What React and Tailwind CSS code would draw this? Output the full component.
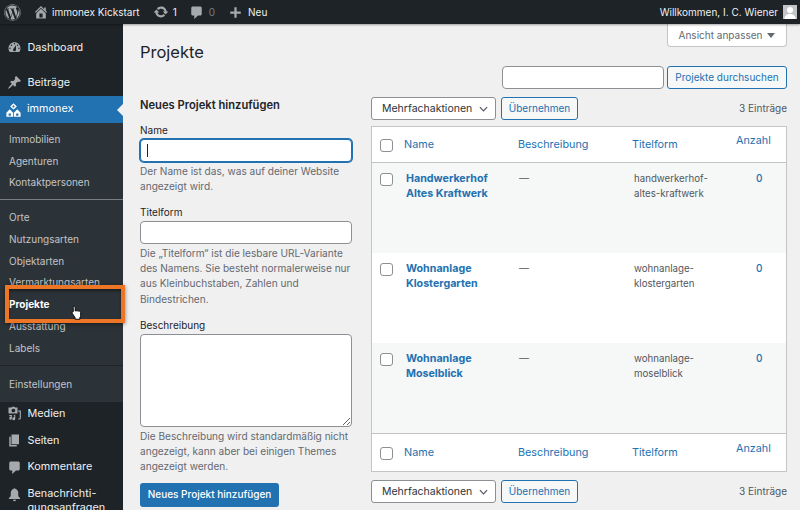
import { FaWordpress } from 'react-icons/fa'

const FONT = "font-['Inter','Liberation_Sans',sans-serif]"

const ICONS = {
  home: 'M16 8.5l1.53 1.53-1.06 1.06L10 4.62l-6.47 6.47-1.06-1.06L10 2.5l4 4v-2h2v4zm-6-2.46l6 5.99V18H4v-5.97zM12 17v-5H8v5h4z',
  update: 'M10.2 3.28c3.53 0 6.43 2.61 6.92 6h2.08l-3.5 4-3.5-4h2.32c-.45-1.97-2.21-3.45-4.32-3.45-1.45 0-2.73.71-3.54 1.78L4.95 5.66C6.23 4.2 8.11 3.28 10.2 3.28zm-.4 13.44c-3.52 0-6.43-2.61-6.92-6H.8l3.5-4c1.17 1.33 2.33 2.67 3.5 4H5.48c.45 1.97 2.21 3.45 4.32 3.45 1.45 0 2.73-.71 3.54-1.78l1.71 1.95c-1.28 1.46-3.15 2.38-5.25 2.38z',
  comment: 'M5 2h10c1.1 0 2 .9 2 2v8c0 1.1-.9 2-2 2h-3l-5 4.5V14H5c-1.1 0-2-.9-2-2V4c0-1.1.9-2 2-2z',
  plus: 'M8.5 3h3v5.5H17v3h-5.500V17h-3v-5.500H3v-3h5.500z',
  dashboard: 'M3.76 16h12.48c1.1-1.37 1.76-3.11 1.76-5 0-4.42-3.58-8-8-8s-8 3.58-8 8c0 1.89.66 3.63 1.76 5zM10 4c.55 0 1 .45 1 1s-.45 1-1 1-1-.45-1-1 .45-1 1-1zM6 6c.55 0 1 .45 1 1s-.45 1-1 1-1-.45-1-1 .45-1 1-1zm8 0c.55 0 1 .45 1 1s-.45 1-1 1-1-.45-1-1 .45-1 1-1zm-5.370 5.550L12 7v6c0 1.100-.9 2-2 2s-2-.9-2-2c0-.57.24-1.080.63-1.450zM4 10c.55 0 1 .45 1 1s-.45 1-1 1-1-.45-1-1 .45-1 1-1zm12 0c.55 0 1 .45 1 1s-.45 1-1 1-1-.45-1-1 .45-1 1-1z',
  pin: 'M10.44 3.02l1.82-1.82 6.36 6.35-1.83 1.82c-1.05-.68-2.48-.57-3.41.36l-.75.75c-.92.93-1.04 2.35-.35 3.41l-1.83 1.82-2.41-2.41-2.8 2.79c-.42.42-3.38 2.71-3.8 2.29s1.86-3.39 2.28-3.81l2.79-2.79L4.1 9.36l1.83-1.82c1.05.69 2.48.57 3.4-.36l.75-.75c.93-.92 1.05-2.35.36-3.41z',
  media: 'M2 2h4l1-1h3l1 1h3v8H2zM8.500 3.500a2.500 2.500 0 1 0 .01 0zM9 12h2v5a2 2 0 1 1-1.500-1.900V13H9zM15 6h3.500v10a2 2 0 0 1-2 2H15v-1.500h1.500a.5.5 0 0 0 .5-.5V7.500h-2zM3 12h3.500v4.500a1.800 1.800 0 1 1-1.500-1.700V13.500H3z',
  pages: 'M6 15V2h10v13H6zm-1 1h8v2H3V5h2v11z',
  bell: 'M10 1.500a1.500 1.500 0 0 1 1.400 1.100C13.700 3.200 15 5.200 15 8v4l2.500 3v1h-15v-1L5 12V8c0-2.800 1.300-4.800 3.600-5.400A1.500 1.500 0 0 1 10 1.500zM8 17h4a2 2 0 0 1-4 0z',
}

function Dash({ name, className }) {
  return (
    <svg viewBox="0 0 20 20" className={className} fill="currentColor">
      <path d={ICONS[name]} />
    </svg>
  )
}

// Logo immonex: drei Haeuser
function ImmonexIcon() {
  return (
    <svg viewBox="0 0 20 18" className="ml-[6px] h-[14px] w-[15px] shrink-0" fill="#fff">
      <path fillRule="evenodd" d="M10 0l4.500 4.200L10 8.400 5.500 4.200zM10 2.800a1.400 1.400 0 1 0 .01 0z" />
      <path fillRule="evenodd" d="M5 8l4.500 4.500V18H.5v-5.500zM3.500 13.500V16.500h3v-3z" />
      <path fillRule="evenodd" d="M15 8l4.500 4.500V18h-9v-5.500zM13.500 13.500V16.500h3v-3z" />
    </svg>
  )
}

function TopBar() {
  return (
    <div className="relative z-20 flex h-6 shrink-0 items-center justify-between bg-[#1d2327] text-[10px] text-[#f0f0f1] shadow-[0_1px_2px_rgba(0,0,0,0.35)]">
      <div className="flex items-center">
        <FaWordpress className="ml-1 h-[17px] w-[17px] text-[#a7aaad]" />
        <Dash name="home" className="ml-[12px] h-[16px] w-[16px] text-[#a7aaad]" />
        <span className="ml-[3px]">immonex Kickstart</span>
        <Dash name="update" className="ml-[13px] h-[16px] w-[16px] text-[#a7aaad]" />
        <span className="ml-[4px]">1</span>
        <Dash name="comment" className="ml-[12px] h-[15px] w-[15px] text-[#a7aaad]" />
        <span className="ml-[5px] text-[#787c82]">0</span>
        <Dash name="plus" className="ml-[13px] h-[15px] w-[15px] text-[#a7aaad]" />
        <span className="ml-[5px]">Neu</span>
      </div>
      <div className="flex items-center">
        <span>Willkommen, I. C. Wiener</span>
        <div className="ml-[5px] mr-[3px] flex h-[14px] w-[14px] items-end justify-center overflow-hidden bg-[#c3c4c7]">
          <svg viewBox="0 0 14 14" className="h-[14px] w-[14px]" fill="#fff">
            <circle cx="7" cy="5" r="3" />
            <path d="M1.500 14c0-3.500 2.500-5 5.500-5s5.500 1.500 5.500 5z" />
          </svg>
        </div>
      </div>
    </div>
  )
}

function MainItem({ icon, label, className = '' }) {
  return (
    <div className={`flex items-center text-[10.800px] leading-[14px] text-[#f0f0f1] ${className}`}>
      <Dash name={icon} className="ml-[7px] h-[15px] w-[15px] shrink-0 text-[#a7aaad]" />
      <span className="ml-[5.500px]">{label}</span>
    </div>
  )
}

function SubItem({ label }) {
  return <div className="flex h-[21.700px] items-center pl-[9px] text-[10px] text-[#c3c4c7]">{label}</div>
}

function Sidebar() {
  return (
    <div className="relative w-[123px] shrink-0 bg-[#1d2327]">
      <MainItem icon="dashboard" label="Dashboard" className="mt-[15px] h-[17px]" />
      <MainItem icon="pin" label="Beiträge" className="mt-[18px] h-[17px]" />
      <div className="relative mt-[5px] flex h-[27px] items-center bg-[#2271b1] text-[10.800px] text-white">
        <ImmonexIcon />
        <span className="ml-[6px]">immonex</span>
        <div className="absolute right-0 top-[8px] h-0 w-0 border-y-[6px] border-r-[6px] border-y-transparent border-r-[#f0f0f1]" />
      </div>
      <div className="bg-[#2c3338]">
        <div className="pt-[5.500px] pb-[5px]">
          <SubItem label="Immobilien" />
          <SubItem label="Agenturen" />
          <SubItem label="Kontaktpersonen" />
        </div>
        <div className="h-px bg-[#787c82]" />
        <div className="pt-[7.500px] pb-[6.500px]">
          <SubItem label="Orte" />
          <SubItem label="Nutzungsarten" />
          <SubItem label="Objektarten" />
          <SubItem label="Vermarktungsarten" />
          <div className="flex h-[21.700px] items-center pl-[9px] text-[10px] font-bold text-white">Projekte</div>
          <SubItem label="Ausstattung" />
          <SubItem label="Labels" />
        </div>
        <div className="h-px bg-[#1d2327]" />
        <div className="flex h-[36px] items-center pl-[9px] text-[10px] text-[#c3c4c7]">Einstellungen</div>
      </div>
      <MainItem icon="media" label="Medien" className="mt-[3px] h-[17px]" />
      <MainItem icon="pages" label="Seiten" className="mt-[10px] h-[17px]" />
      <MainItem icon="comment" label="Kommentare" className="mt-[9.500px] h-[17px]" />
      <div className="mt-[11px] flex text-[10.800px] leading-[14px] text-[#f0f0f1]">
        <Dash name="bell" className="ml-[7px] h-[15px] w-[15px] shrink-0 text-[#a7aaad]" />
        <span className="ml-[5.500px]">Benachrichti-<br />gungsanfragen</span>
      </div>
      {/* Markierung */}
      <div className="absolute left-[5px] top-[261px] z-10 h-[38px] w-[120px] border-[4.500px] border-[#ed7526] shadow-[0_1px_4px_rgba(0,0,0,0.5),inset_0_2px_3px_rgba(0,0,0,0.45)]" />
      <svg viewBox="0 0 16 20" className="absolute left-[71px] top-[281px] z-10 h-[15px] w-[12px]">
        <path d="M4 1.500c.9 0 1.500.6 1.500 1.500v5l1-.3c.5-.1 1 0 1.300.3l1-.2c.5-.1 1 .1 1.300.4l.9-.1c1 0 1.800.7 1.800 1.700v4.200c0 1.200-.4 2.200-1 3v2H5.500v-2L2 11.500c-.7-.8-.6-1.700 0-2.200.6-.4 1.300-.3 1-.3V3c0-.9.100-1.500 1-1.500z" fill="#fff" stroke="#000" strokeWidth="1.200" strokeLinejoin="round" />
      </svg>
    </div>
  )
}

function Field({ label, hint, children, className = '', hintClass = 'mt-[1.500px]' }) {
  return (
    <div className={className}>
      <div className="text-[10px] leading-[15px] text-[#1d2327]">{label}</div>
      {children}
      <p className={`${hintClass} text-[10.100px] leading-[15.200px] text-[#646970]`}>{hint}</p>
    </div>
  )
}

function AddForm() {
  return (
    <div className="w-[212px] shrink-0">
      <div className="text-[11.200px] font-semibold leading-[16px] text-[#1d2327]">Neues Projekt hinzufügen</div>
      <Field
        label="Name"
        className="mt-[10px]"
        hintClass="mt-[2px]"
        hint={<>Der Name ist das, was auf deiner Website<br />angezeigt wird.</>}
      >
        <div className="relative mt-[1px]">
          <input className="block h-[23px] w-full rounded-[4px] border border-[#2271b1] bg-white shadow-[0_0_0_1px_#2271b1] outline-none" />
          <div className="absolute left-[7px] top-[5px] h-[13px] w-px bg-[#1d2327]" />
        </div>
      </Field>
      <Field
        label="Titelform"
        className="mt-[10.500px]"
        hint={<>Die „Titelform“ ist die lesbare URL-Variante<br />des Namens. Sie besteht normalerweise nur<br />aus Kleinbuchstaben, Zahlen und<br />Bindestrichen.</>}
      >
        <input className="mt-[1.500px] block h-[23px] w-full rounded-[4px] border border-[#8c8f94] bg-white outline-none" />
      </Field>
      <Field
        label="Beschreibung"
        className="mt-[10.800px]"
        hint={<>Die Beschreibung wird standardmäßig nicht<br />angezeigt, kann aber bei einigen Themes<br />angezeigt werden.</>}
      >
        <textarea className="mb-[2.400px] mt-[1px] block h-[93px] w-full rounded-[4px] border border-[#8c8f94] bg-white outline-none" />
      </Field>
      <button className="mt-[8.500px] block h-[23.500px] w-[139px] rounded-[3px] bg-[#2271b1] text-[10px] font-medium text-white">
        Neues Projekt hinzufügen
      </button>
    </div>
  )
}

function BulkBar({ className = '' }) {
  return (
    <div className={`flex items-center ${className}`}>
      <div className="relative h-[23px] w-[125px]">
        <select className="block h-full w-full appearance-none rounded-[3px] border border-[#8c8f94] bg-white pl-[10px] text-[10.500px] text-[#2c3338] outline-none">
          <option>Mehrfachaktionen</option>
        </select>
        <svg viewBox="0 0 10 6" className="pointer-events-none absolute right-[8px] top-[9px] h-[6px] w-[9px]" fill="none" stroke="#50575e" strokeWidth="1.300">
          <path d="M1 1l4 4 4-4" />
        </svg>
      </div>
      <button className="ml-[5px] h-[23px] w-[77px] rounded-[3px] border border-[#2271b1] bg-[#f6f7f7] text-[10px] text-[#2271b1]">Übernehmen</button>
      <span className="ml-auto text-[10px] text-[#50575e]">3 Einträge</span>
    </div>
  )
}

function Check() {
  return <div className="h-[13px] w-[13px] rounded-[3px] border border-[#8c8f94] bg-white" />
}

const COLS = 'grid grid-cols-[24px_114px_114px_102px_1fr]'

function HeadRow({ className = '', countClass = 'pt-[6px]' }) {
  return (
    <div className={`${COLS} bg-white text-[10.800px] text-[#2271b1] ${className}`}>
      <div className="flex items-center pl-[8px] pt-[1px]"><Check /></div>
      <div className="flex items-center pl-[8px] pt-[1px]">Name</div>
      <div className="flex items-center pl-[8px] pt-[1px]">Beschreibung</div>
      <div className="flex items-center pl-[8px] pt-[1px]">Titelform</div>
      <div className={`pl-[10px] leading-[16px] ${countClass}`}>Anzahl</div>
    </div>
  )
}

const PROJECTS = [
  { name: ['Handwerkerhof', 'Altes Kraftwerk'], slug: ['handwerkerhof-', 'altes-kraftwerk'] },
  { name: ['Wohnanlage', 'Klostergarten'], slug: ['wohnanlage-', 'klostergarten'] },
  { name: ['Wohnanlage', 'Moselblick'], slug: ['wohnanlage-', 'moselblick'] },
]

function ProjectRow({ project, striped }) {
  return (
    <div className={`${COLS} h-[90px] pt-[7.500px] leading-[15.500px] ${striped ? 'bg-[#f6f7f7]' : 'bg-white'}`}>
      <div className="pl-[8px] pt-[2px]"><Check /></div>
      <div className="pl-[10px] text-[10.700px] font-bold text-[#2271b1]">{project.name[0]}<br />{project.name[1]}</div>
      <div className="pl-[9px] text-[10px] text-[#50575e]">—</div>
      <div className="pl-[10px] text-[9.700px] text-[#50575e]">{project.slug[0]}<br />{project.slug[1]}</div>
      <div className="pl-[30px] text-[10px] font-medium text-[#2271b1]">0</div>
    </div>
  )
}

function ListTable() {
  return (
    <div className="min-w-0 flex-1">
      <BulkBar />
      <div className="mt-[6px] border border-[#c3c4c7] bg-white">
        <HeadRow className="h-[36px] border-b border-[#c3c4c7]" />
        {PROJECTS.map((p, i) => (
          <ProjectRow key={p.slug[1]} project={p} striped={i !== 1} />
        ))}
        <HeadRow className="h-[38px] border-t border-[#c3c4c7]" countClass="pt-[7px]" />
      </div>
      <BulkBar className="mt-[8px]" />
    </div>
  )
}

function Content() {
  return (
    <div className="relative min-w-0 flex-1 overflow-hidden bg-[#f0f0f1] pl-[17px] pr-[13px]">
      <div className="flex justify-end">
        <button className="flex h-[23px] w-[120px] items-center justify-center gap-[5px] rounded-b-[4px] border border-t-0 border-[#c3c4c7] bg-white text-[10px] text-[#646970]">
          Ansicht anpassen
          <span className="h-0 w-0 border-x-[4px] border-t-[5px] border-x-transparent border-t-[#646970]" />
        </button>
      </div>
      <h1 className="absolute left-[17px] top-[15px] text-[16.500px] font-normal leading-[26px] text-[#1d2327]">Projekte</h1>
      <div className="mt-[19px] flex justify-end gap-[3px]">
        <input className="h-[23px] w-[162px] rounded-[4px] border border-[#8c8f94] bg-white outline-none" />
        <button className="h-[23px] w-[120px] rounded-[3px] border border-[#2271b1] bg-[#f6f7f7] text-[10px] text-[#2271b1]">Projekte durchsuchen</button>
      </div>
      <div className="mt-[8px] flex gap-[19px]">
        <AddForm />
        <ListTable />
      </div>
    </div>
  )
}

export default function App() {
  return (
    <div className={`flex h-[510px] w-[800px] flex-col overflow-hidden ${FONT}`}>
      <TopBar />
      <div className="flex min-h-0 flex-1">
        <Sidebar />
        <Content />
      </div>
    </div>
  )
}
